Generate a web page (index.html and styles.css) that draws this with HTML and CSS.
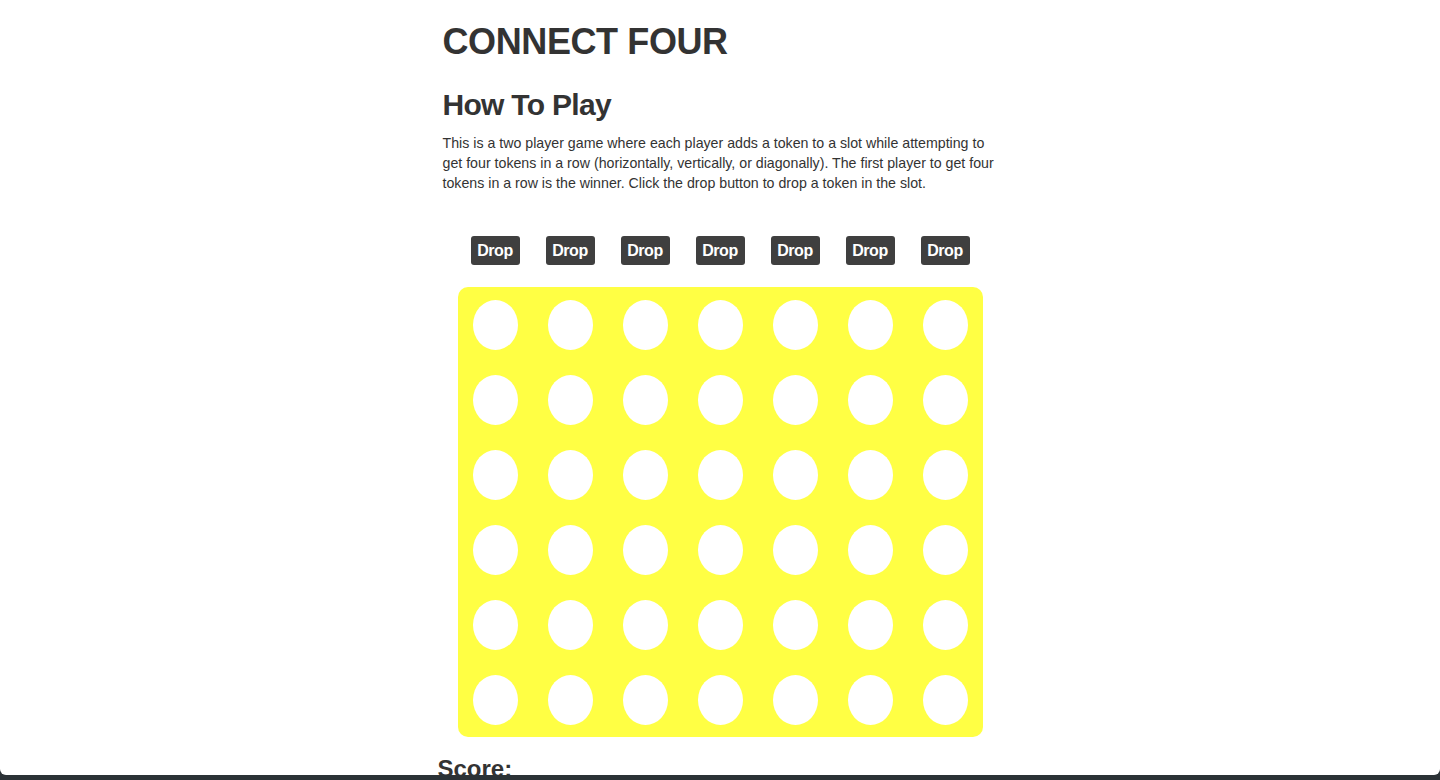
FILE: index.html
```html
<!DOCTYPE html>
<html lang="en">
<head>
<meta charset="utf-8">
<title>Connect Four</title>
<link rel="stylesheet" href="styles.css">
</head>
<body>
<div class="window">
  <div class="container">
    <h1 class="title">CONNECT FOUR</h1>
    <h2 class="subtitle">How To Play</h2>
    <p class="rules">This is a two player game where each player adds a token to a slot while attempting to get four tokens in a row (horizontally, vertically, or diagonally). The first player to get four tokens in a row is the winner. Click the drop button to drop a token in the slot.</p>
    <div class="game">
      <div class="drops">
        <div class="drop-cell"><button class="drop">Drop</button></div>
        <div class="drop-cell"><button class="drop">Drop</button></div>
        <div class="drop-cell"><button class="drop">Drop</button></div>
        <div class="drop-cell"><button class="drop">Drop</button></div>
        <div class="drop-cell"><button class="drop">Drop</button></div>
        <div class="drop-cell"><button class="drop">Drop</button></div>
        <div class="drop-cell"><button class="drop">Drop</button></div>
      </div>
      <div class="board">
        <div class="slot"></div><div class="slot"></div><div class="slot"></div><div class="slot"></div><div class="slot"></div><div class="slot"></div><div class="slot"></div>
        <div class="slot"></div><div class="slot"></div><div class="slot"></div><div class="slot"></div><div class="slot"></div><div class="slot"></div><div class="slot"></div>
        <div class="slot"></div><div class="slot"></div><div class="slot"></div><div class="slot"></div><div class="slot"></div><div class="slot"></div><div class="slot"></div>
        <div class="slot"></div><div class="slot"></div><div class="slot"></div><div class="slot"></div><div class="slot"></div><div class="slot"></div><div class="slot"></div>
        <div class="slot"></div><div class="slot"></div><div class="slot"></div><div class="slot"></div><div class="slot"></div><div class="slot"></div><div class="slot"></div>
        <div class="slot"></div><div class="slot"></div><div class="slot"></div><div class="slot"></div><div class="slot"></div><div class="slot"></div><div class="slot"></div>
      </div>
    </div>
    <h3 class="score">Score:</h3>
  </div>
</div>
</body>
</html>
```

FILE: styles.css
```css
html {
  background: #2b3236;
}
body {
  margin: 0;
  font-family: "Liberation Sans", Arial, sans-serif;
  font-size: 14px;
  line-height: 20px;
  color: #333333;
}
.window {
  height: 775px;
  overflow: hidden;
  background: #ffffff;
  border-radius: 0 0 6px 6px;
}
.container {
  width: 555px;
  margin: 0 auto;
}
.title {
  margin: 21px 0 0;
  font-size: 36px;
  line-height: 41px;
  font-weight: 700;
  letter-spacing: -0.4px;
}
.subtitle {
  margin: 26px 0 0;
  font-size: 30px;
  line-height: 33px;
  font-weight: 700;
  letter-spacing: -0.7px;
}
.rules {
  margin: 12px 0 0;
  font-size: 14.2px;
}
.game {
  margin: 43px 0 0 15px;
  width: 525px;
}
.drops {
  display: grid;
  grid-template-columns: repeat(7, 75px);
}
.drop-cell {
  display: flex;
  justify-content: center;
}
.drop {
  width: 49px;
  height: 29px;
  padding: 0;
  border: 0;
  border-radius: 3px;
  background: #3f3f3f;
  color: #ffffff;
  font-family: "Liberation Sans", Arial, sans-serif;
  font-size: 16px;
  font-weight: 700;
  letter-spacing: -0.4px;
}
.board {
  margin-top: 22px;
  display: grid;
  grid-template-columns: repeat(7, 75px);
  grid-auto-rows: 75px;
  background: #ffff44;
  border-radius: 10px;
}
.slot {
  width: 45px;
  height: 50px;
  margin: 13px 15px 12px;
  border-radius: 50%;
  background: #ffffff;
}
.score {
  margin: 19px 0 0 -5px;
  font-size: 24px;
  line-height: 26px;
  font-weight: 700;
}
```
